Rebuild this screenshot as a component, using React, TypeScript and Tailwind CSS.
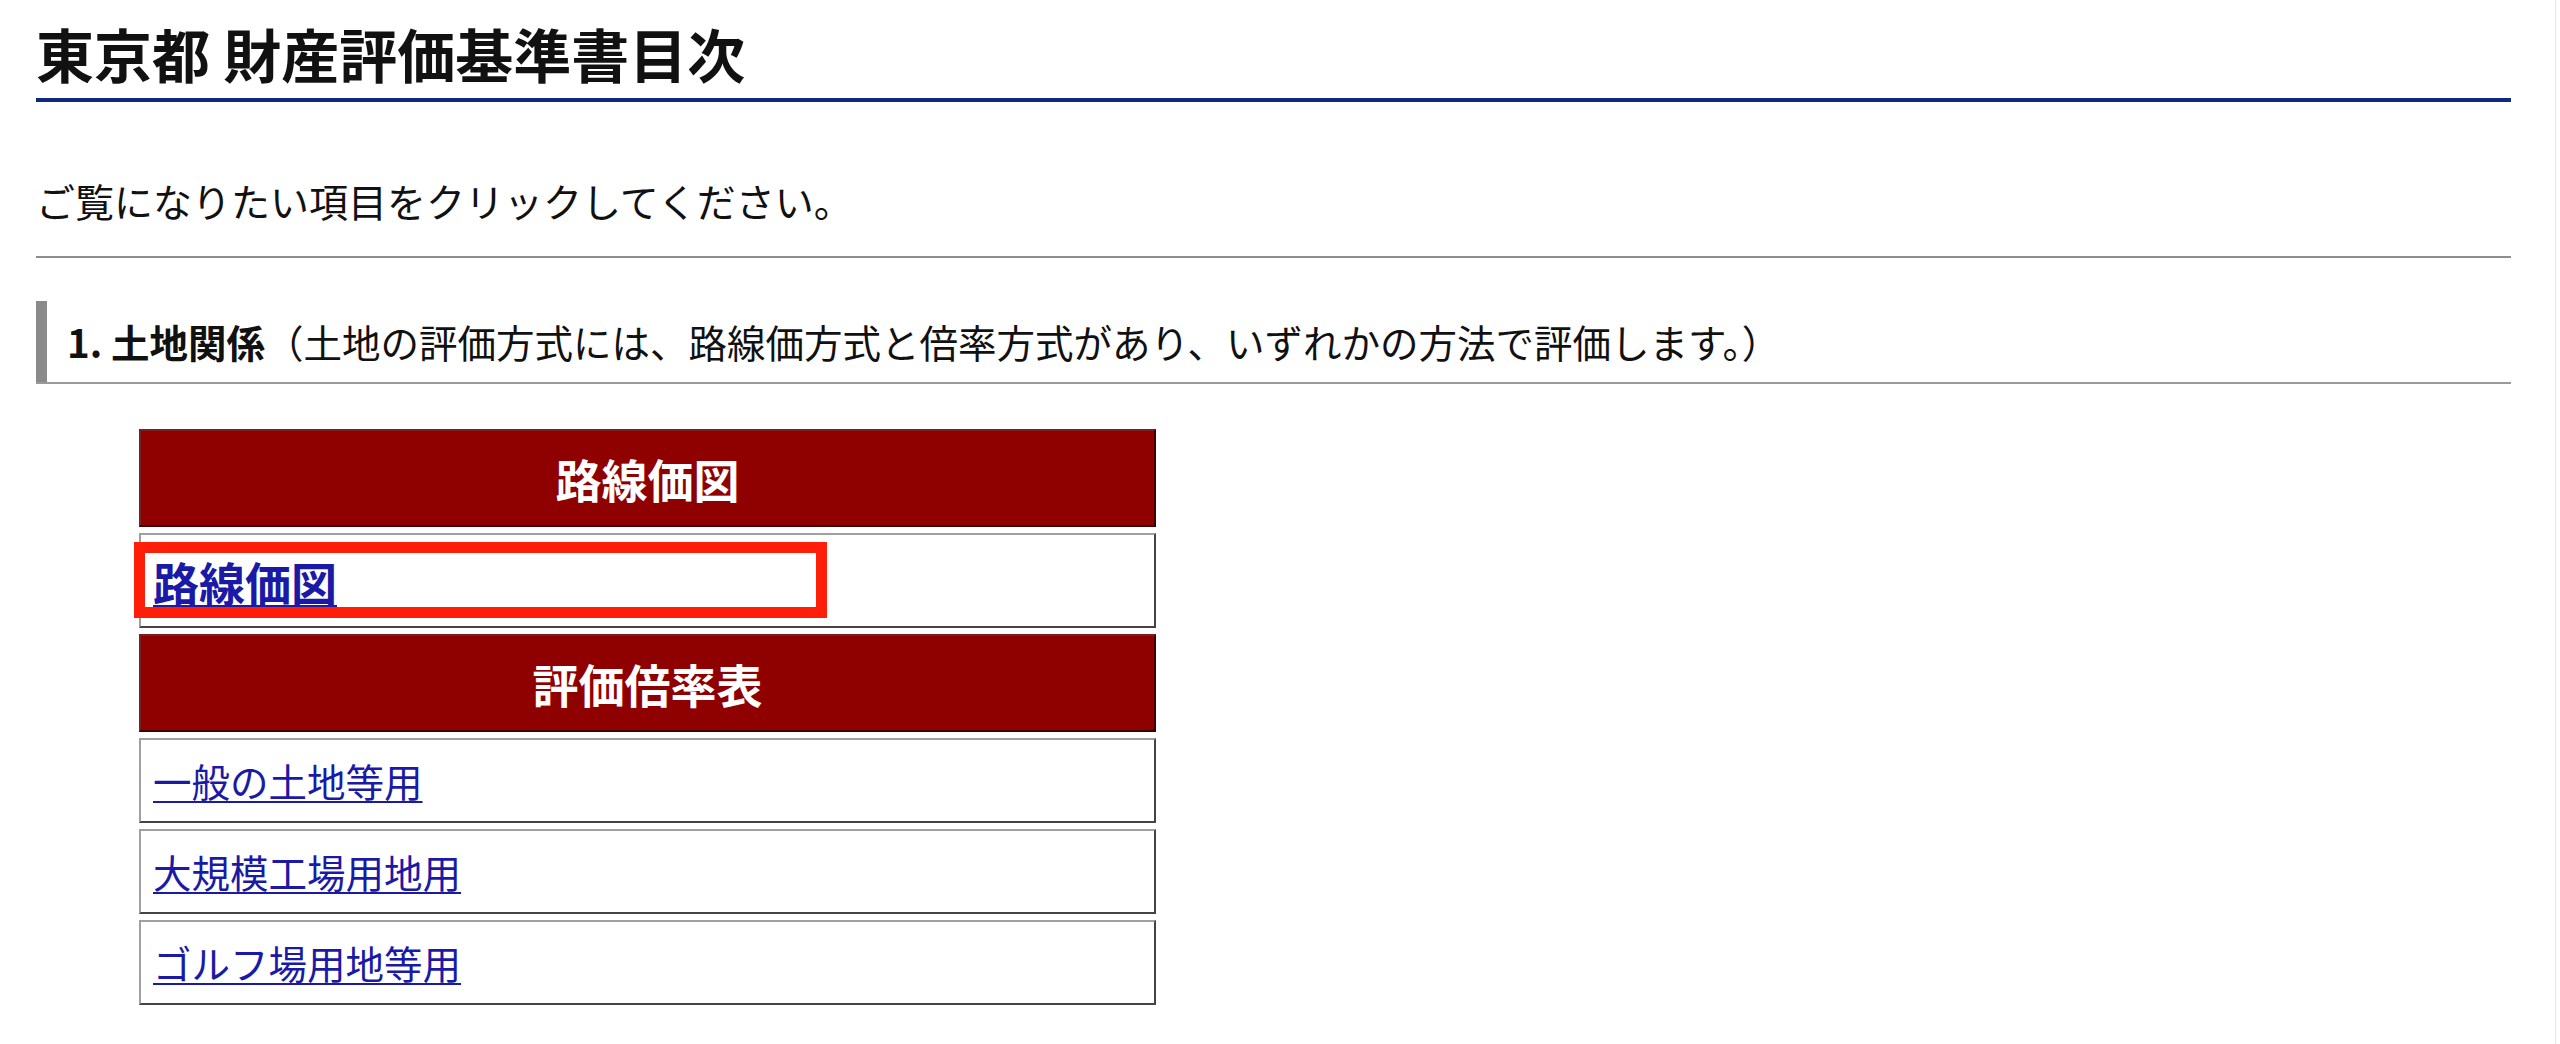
import React from 'react';

const font = { fontFamily: '"Noto Sans CJK JP", "Noto Sans", sans-serif' };

const rateLinks = ['一般の土地等用', '大規模工場用地用', 'ゴルフ場用地等用'];

function HeaderCell({ label }: { label: string }) {
  return (
    <div className="h-[98px] flex items-center justify-center bg-[#8f0000] border-2 border-t-[#7a2020] border-l-[#7a2020] border-b-[#3a0000] border-r-[#3a0000]">
      <span className="text-white font-bold text-[46px] leading-none">{label}</span>
    </div>
  );
}

function LinkCell({ label, big }: { label: string; big?: boolean }) {
  return (
    <div
      className={`relative flex items-center pl-[12px] bg-white border-2 border-t-[#a0a0a0] border-l-[#a0a0a0] border-b-[#444] border-r-[#444] ${
        big ? 'h-[95px]' : 'h-[85px]'
      }`}
    >
      <a
        href="#"
        className={`text-[#1a1aa6] underline leading-none ${
          big ? 'font-bold text-[46px] decoration-[3px] underline-offset-[4px]' : 'text-[38.5px] decoration-2 underline-offset-[4px]'
        }`}
      >
        {label}
      </a>
      {big && (
        <div className="absolute left-[-7px] top-[7px] w-[693px] h-[76px] border-[11px] border-[#ff1e0a] pointer-events-none" />
      )}
    </div>
  );
}

export default function App() {
  return (
    <div className="w-[2556px] min-h-[1044px] bg-white border-r border-[#e6e6e6] text-[#111]" style={font}>
      <div className="pl-[36px] pr-[44px]">
        <h1 className="pt-[24px] pb-[16px] border-b-4 border-[#0d2a80] text-[58px] leading-[58px] font-bold">
          東京都 財産評価基準書目次
        </h1>

        <p className="mt-[79px] text-[39px] leading-[39px]">ご覧になりたい項目をクリックしてください。</p>

        <div className="mt-[36px] h-[2px] bg-[#8e8e8e]" />

        <div className="mt-[43px] flex border-b-2 border-[#9a9a9a]">
          <div className="w-[11px] bg-[#8a8a8a]" />
          <div className="h-[81px] flex items-center pl-[20px] text-[38.5px] leading-none">
            <span className="font-bold">1. 土地関係</span>
            <span>（土地の評価方式には、路線価方式と倍率方式があり、いずれかの方法で評価します。）</span>
          </div>
        </div>

        <div className="mt-[45px] ml-[103px] w-[1017px] flex flex-col gap-[6px] pb-[38px]">
          <HeaderCell label="路線価図" />
          <LinkCell label="路線価図" big />
          <HeaderCell label="評価倍率表" />
          {rateLinks.map((l) => (
            <LinkCell key={l} label={l} />
          ))}
        </div>
      </div>
    </div>
  );
}
